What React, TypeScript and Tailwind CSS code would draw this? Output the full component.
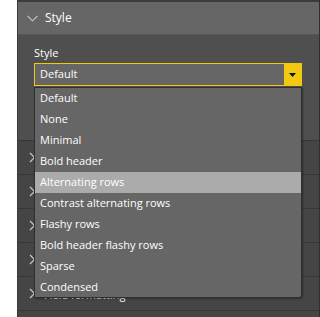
import React from "react";

const items = [
  "Default",
  "None",
  "Minimal",
  "Bold header",
  "Alternating rows",
  "Contrast alternating rows",
  "Flashy rows",
  "Bold header flashy rows",
  "Sparse",
  "Condensed",
];

const sections = ["Grid", "Column headers", "Values", "Total", "Field formatting", ""];

function ChevronRight() {
  return (
    <svg width="7" height="11" viewBox="0 0 7 11" className="shrink-0">
      <path d="M1 1 L5.5 5.5 L1 10" fill="none" stroke="#c8c8c8" strokeWidth="1.2" />
    </svg>
  );
}

function ChevronDown() {
  return (
    <svg width="11" height="7" viewBox="0 0 11 7" className="shrink-0">
      <path d="M0.5 0.8 L5.5 5.8 L10.5 0.8" fill="none" stroke="#c8c8c8" strokeWidth="1.1" />
    </svg>
  );
}

export default function App() {
  return (
    <div
      className="w-[320px] h-[317px] bg-white flex overflow-hidden text-white"
      style={{ fontFamily: '"Open Sans", "Noto Sans", sans-serif' }}
    >
      <div className="w-[17px] shrink-0" />
      <div className="relative flex-1 flex flex-col overflow-hidden border-l border-[#3a3a3a] border-r border-r-[#2e2e2e] bg-[#454545]">
        <div className="h-[2px] shrink-0 bg-[#3c3c3c]" />
        <div className="h-[33px] shrink-0 bg-[#666666] flex items-center pl-[9px] gap-[7px] border-b border-[#555555]">
          <ChevronDown />
          <span className="text-[12px] leading-none">Style</span>
        </div>
        <div className="h-[105px] shrink-0 bg-[#4f4f4f] pl-[16px] pt-[11px]">
          <div className="text-[11px] leading-[14px] h-[14px]">Style</div>
          <div className="mt-[3px] h-[23px] w-[268px] flex border border-[#f2c811] bg-[#666666]">
            <div className="flex-1 flex items-center pl-[5px] text-[11px]">Default</div>
            <div className="w-[17px] bg-[#f2c811] flex items-center justify-center">
              <svg width="7" height="4" viewBox="0 0 7 4">
                <path d="M0 0 H7 L3.5 4 Z" fill="#111" />
              </svg>
            </div>
          </div>
        </div>
        {sections.map((s, i) => (
          <div key={i} className="h-[34px] shrink-0 border-t border-[#373737] flex items-center pl-[11px] gap-[8px]">
            <ChevronRight />
            {s && <span className="text-[11px] pt-[3px]">{s}</span>}
          </div>
        ))}
        <div className="absolute left-[16px] top-[87px] w-[268px] h-[211px] bg-[#666666] border border-[#2f2f2f] rounded-br-[3px] shadow-[1px_1px_2px_rgba(0,0,0,0.35)] flex flex-col">
          {items.map((it) => (
            <div
              key={it}
              className={
                "h-[21px] shrink-0 flex items-center pl-[5px] text-[11px] " +
                (it === "Alternating rows" ? "bg-[#ababab]" : "")
              }
            >
              {it}
            </div>
          ))}
        </div>
      </div>
    </div>
  );
}
